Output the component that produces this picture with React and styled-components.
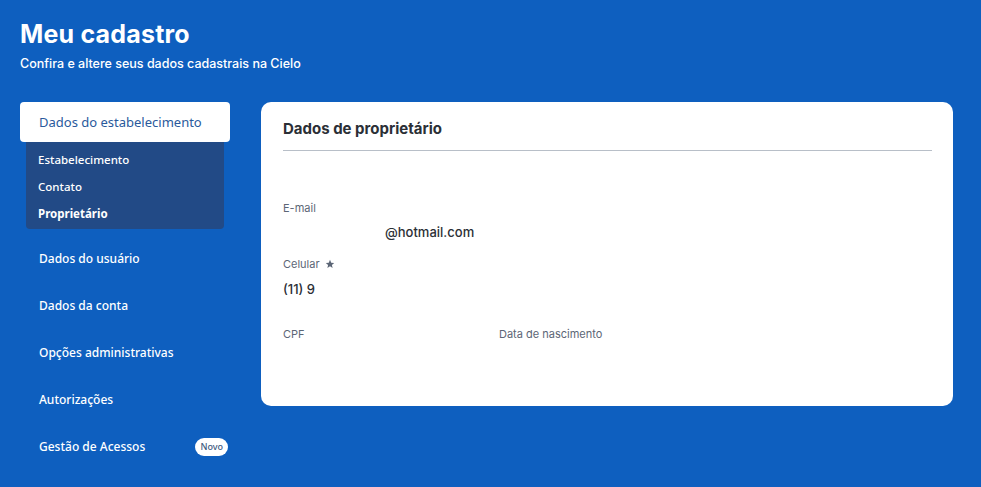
import React from "react";
import styled, { createGlobalStyle } from "styled-components";

const Global = createGlobalStyle`
  html, body { margin: 0; padding: 0; background: #0e5fbf; }
  body { font-family: Inter, "Noto Sans", sans-serif; }
  * { box-sizing: border-box; }
`;

const Page = styled.div`
  width: 981px;
  height: 487px;
  background: #0e5fbf;
  padding: 18px 28px 0 20px;
  overflow: hidden;
`;

const Header = styled.header`
  display: flex;
  flex-direction: column;
  gap: 6px;
  color: #fff;
`;

const Title = styled.h1`
  margin: 0;
  font-family: Inter, sans-serif;
  font-weight: 700;
  font-size: 25px;
  line-height: 32px;
  letter-spacing: 0.2px;
`;

const Subtitle = styled.p`
  margin: 0;
  font-family: Inter, sans-serif;
  font-weight: 500;
  font-size: 12.5px;
  line-height: 16px;
`;

const Body = styled.div`
  display: grid;
  grid-template-columns: 210px 1fr;
  column-gap: 31px;
  margin-top: 30px;
  align-items: start;
`;

const Nav = styled.nav`
  display: flex;
  flex-direction: column;
`;

const ActiveItem = styled.div`
  height: 40px;
  background: #fff;
  border-radius: 4px;
  display: flex;
  align-items: center;
  padding-left: 19px;
  font-family: "Noto Sans", sans-serif;
  font-size: 13px;
  color: #2a5a9c;
`;

const SubMenu = styled.div`
  margin: 0 6px;
  background: #224a86;
  border-radius: 0 0 4px 4px;
  display: flex;
  flex-direction: column;
  padding: 4px 0 2px 12px;
`;

const SubItem = styled.div`
  height: 27px;
  display: flex;
  align-items: center;
  font-family: "Noto Sans", sans-serif;
  font-size: 11.5px;
  color: #fff;
  font-weight: ${(p) => (p.$active ? 700 : 500)};
`;

const NavItem = styled.div`
  height: 47px;
  display: flex;
  align-items: center;
  justify-content: space-between;
  padding-left: 19px;
  font-family: "Noto Sans", sans-serif;
  font-size: 12px;
  font-weight: 500;
  color: #fff;
`;

const NavList = styled.div`
  display: flex;
  flex-direction: column;
  margin-top: 6px;
`;

const Badge = styled.span`
  background: #fff;
  color: #3d5a80;
  font-size: 9px;
  height: 18px;
  padding: 0 5px;
  border-radius: 9px;
  display: inline-flex;
  align-items: center;
  margin-right: 2px;
  font-family: "Noto Sans", sans-serif;
`;

const Card = styled.section`
  background: #fff;
  border-radius: 10px;
  height: 304px;
  padding: 0 21px 0 22px;
`;

const CardTitle = styled.h2`
  margin: 0;
  height: 49px;
  display: flex;
  align-items: flex-end;
  padding-bottom: 12px;
  font-family: Inter, sans-serif;
  font-size: 15px;
  font-weight: 700;
  color: #2b2f36;
  border-bottom: 1px solid #b8bfc8;
`;

const Fields = styled.div`
  display: flex;
  flex-direction: column;
  padding-top: 50px;
`;

const Field = styled.div`
  display: flex;
  flex-direction: column;
  gap: ${(p) => p.$gap || 8}px;
  margin-bottom: ${(p) => p.$mb || 0}px;
`;

const Row = styled.div`
  display: grid;
  grid-template-columns: 216px 1fr;
`;

const Label = styled.div`
  font-family: Inter, sans-serif;
  font-size: 11px;
  color: #5c6676;
  display: flex;
  align-items: center;
  gap: 5px;
  line-height: 14px;
`;

const Value = styled.div`
  font-family: Inter, sans-serif;
  font-size: 13px;
  color: #2b2f36;
  font-weight: 500;
  line-height: 18px;
  padding-left: ${(p) => p.$indent || 0}px;
`;

const Star = () => (
  <svg width="10" height="10" viewBox="0 0 24 24" fill="#5c6676">
    <path d="M12 2l2.9 6.9 7.1.6-5.4 4.7 1.7 7.3L12 17.6 5.7 21.5l1.7-7.3L2 9.5l7.1-.6z" />
  </svg>
);

export default function App() {
  return (
    <Page>
      <Global />
      <Header>
        <Title>Meu cadastro</Title>
        <Subtitle>Confira e altere seus dados cadastrais na Cielo</Subtitle>
      </Header>
      <Body>
        <Nav>
          <ActiveItem>Dados do estabelecimento</ActiveItem>
          <SubMenu>
            <SubItem>Estabelecimento</SubItem>
            <SubItem>Contato</SubItem>
            <SubItem $active>Proprietário</SubItem>
          </SubMenu>
          <NavList>
            <NavItem>Dados do usuário</NavItem>
            <NavItem>Dados da conta</NavItem>
            <NavItem>Opções administrativas</NavItem>
            <NavItem>Autorizações</NavItem>
            <NavItem>
              Gestão de Acessos <Badge>Novo</Badge>
            </NavItem>
          </NavList>
        </Nav>
        <Card>
          <CardTitle>Dados de proprietário</CardTitle>
          <Fields>
            <Field $mb={16}>
              <Label>E-mail</Label>
              <Value $indent={102}>@hotmail.com</Value>
            </Field>
            <Field $mb={29} $gap={9}>
              <Label>
                Celular <Star />
              </Label>
              <Value>(11) 9</Value>
            </Field>
            <Row>
              <Label>CPF</Label>
              <Label>Data de nascimento</Label>
            </Row>
          </Fields>
        </Card>
      </Body>
    </Page>
  );
}
